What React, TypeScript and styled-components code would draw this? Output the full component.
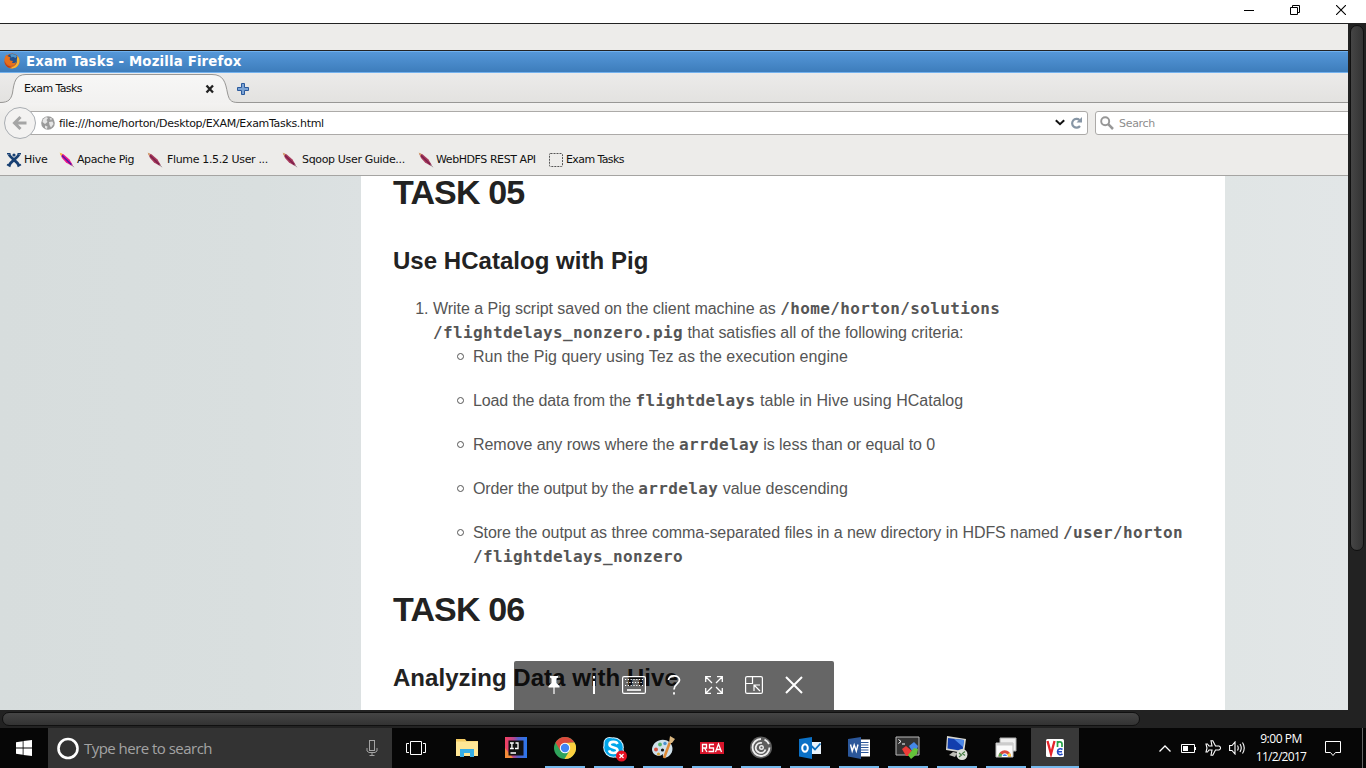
import React from "react";
import styled, { createGlobalStyle, css } from "styled-components";

const GlobalStyle = createGlobalStyle`
  *, *::before, *::after { box-sizing: border-box; }
  html, body { margin: 0; padding: 0; height: 768px; overflow: hidden; background: #060606; }
  svg { display: block; flex: none; }
`;

const Screen = styled.div`
  width: 1366px;
  height: 768px;
  display: flex;
  flex-direction: column;
  overflow: hidden;
  font-family: "DejaVu Sans", sans-serif;
`;

const WindowBar = styled.header`
  height: 24px;
  flex: none;
  background: #fff;
  border-bottom: 1px solid #222;
  display: flex;
  justify-content: flex-end;
  padding-right: 2px;
`;

const WindowButton = styled.div`
  width: 46px;
  height: 20px;
  display: flex;
  align-items: center;
  justify-content: center;
`;

const Viewer = styled.div`
  height: 686px;
  flex: none;
  display: flex;
  background: #222;
`;

const Remote = styled.div`
  width: 1348px;
  height: 686px;
  flex: none;
  position: relative;
  display: flex;
  flex-direction: column;
  overflow: hidden;
`;

const PanelStrip = styled.div`
  height: 27px;
  flex: none;
  background: #edecea;
  border-bottom: 1px solid #222;
`;

const TitleBar = styled.div`
  height: 22px;
  flex: none;
  display: flex;
  align-items: center;
  padding: 0 0 2px 4px;
  gap: 6px;
  color: #fff;
  background: linear-gradient(#5597d8, #3d7dbc);
  border-top: 1px solid #6fb0ee;
  border-bottom: 1px solid #74b2ee;
  font: bold 13.3px "DejaVu Sans", sans-serif;
  letter-spacing: 0.16px;
`;

const TabStrip = styled.div`
  height: 30px;
  flex: none;
  display: flex;
  background: linear-gradient(#ecebea, #e3e2e0);
  border-bottom: 1px solid #989795;
`;

const Tab = styled.div`
  width: 236px;
  height: 30px;
  position: relative;
  flex: none;
  display: flex;
  align-items: center;
  padding: 0 21px 0 24px;
  justify-content: space-between;
`;

const TabShape = styled.svg`
  position: absolute;
  left: 0;
  top: 0;
`;

const TabClose = styled.svg`
  position: relative;
  margin-top: 1px;
`;

const Label = styled.span<{ $ls?: number; $color?: string }>`
  position: relative;
  white-space: nowrap;
  font-size: 11px;
  letter-spacing: ${(p) => p.$ls ?? 0}px;
  color: ${(p) => p.$color ?? "#111"};
`;

const NewTab = styled.div`
  padding: 10px 0 0 1px;
`;

const NavBar = styled.div`
  height: 41px;
  flex: none;
  display: flex;
  align-items: center;
  padding: 0 0 2px 4px;
  background: linear-gradient(#f3f2f1, #edecea 12px);
`;

const BackButton = styled.div`
  width: 32px;
  height: 32px;
  flex: none;
  z-index: 1;
  border-radius: 50%;
  border: 1px solid #a9adb2;
  background: #f3f2f1;
  display: flex;
  align-items: center;
  justify-content: center;
`;

const UrlField = styled.div`
  width: 1060px;
  height: 24px;
  margin-left: -8px;
  flex: none;
  display: flex;
  align-items: center;
  padding-left: 12px;
  background: #fff;
  border: 1px solid #acaaa8;
  border-radius: 0 3px 3px 0;
`;

const Address = styled.div`
  flex: 1;
  display: flex;
  padding: 2px 0 0 4px;
`;

const SearchPrompt = styled.div`
  display: flex;
  padding-top: 2px;
`;

const SearchField = styled.div`
  width: 260px;
  height: 24px;
  margin-left: 7px;
  flex: none;
  display: flex;
  align-items: center;
  gap: 5px;
  padding-left: 4px;
  background: #fff;
  border: 1px solid #acaaa8;
  border-radius: 3px;
`;

const BookmarkBar = styled.div`
  height: 32px;
  flex: none;
  display: flex;
  align-items: center;
  padding-left: 6px;
  background: #edecea;
  border-bottom: 1px solid #a5a4a2;
`;

const Bookmark = styled.div<{ $w: number; $gap: number }>`
  width: ${(p) => p.$w}px;
  flex: none;
  display: flex;
  align-items: center;
  gap: ${(p) => p.$gap}px;
`;

const PageView = styled.main`
  height: 534px;
  flex: none;
  overflow: hidden;
  background: linear-gradient(90deg, #d7dddd, #d9dfdf 260px, #dce1e2 361px, #e0e5e5 1225px, #e2e6e7);
`;

const Sheet = styled.article`
  width: 864px;
  height: 560px;
  margin-left: 361px;
  padding: 0 32px;
  background: #fff;
  color: #555;
  font: 16px/24px "Liberation Sans", sans-serif;
`;

const TaskTitle = styled.h1<{ $top: number }>`
  margin: ${(p) => p.$top}px 0 0;
  font-size: 34px;
  line-height: 32px;
  letter-spacing: -0.85px;
  color: #222;
`;

const TaskSubtitle = styled.h2`
  margin: 38px 0 0;
  font-size: 24px;
  line-height: 30px;
  letter-spacing: 0.03px;
  color: #222;
`;

const Steps = styled.ol`
  margin: 21px 0 0;
  padding-left: 40px;
`;

const SubSteps = styled.ul`
  margin: 0;
  padding-left: 40px;
  list-style: none;
`;

const SubStep = styled.li`
  & + & { margin-top: 20px; }
  &::before {
    content: "";
    display: inline-block;
    width: 7px;
    height: 7px;
    margin: 0 9px 2px -16px;
    border: 1px solid #555;
    border-radius: 50%;
  }
`;

const Line = styled.span`
  white-space: nowrap;
`;

const Run = styled.span<{ $ls: number }>`
  letter-spacing: ${(p) => p.$ls}px;
`;

const Code = styled.code`
  font: bold 16px/16px "DejaVu Sans Mono", monospace;
  letter-spacing: 0.367px;
`;

const SessionTools = styled.div`
  position: absolute;
  left: 514px;
  top: 637px;
  width: 320px;
  height: 49px;
  padding: 0 20px;
  display: flex;
  background: rgba(0, 0, 0, 0.6);
  border-radius: 2px 2px 0 0;
`;

const Tool = styled.div`
  width: 40px;
  height: 48px;
  display: flex;
  align-items: center;
  justify-content: center;
`;

const VerticalTrack = styled.div`
  width: 18px;
  padding: 1px 2px 0 2px;
`;

const thumb = css`
  border: 1px solid #101010;
  border-radius: 7px;
`;

const VerticalThumb = styled.div`
  ${thumb}
  width: 14px;
  height: 526px;
  background: linear-gradient(90deg, #454545, #333);
`;

const HorizontalTrack = styled.div`
  height: 18px;
  flex: none;
  padding: 2px 0 0 2px;
  background: #222;
`;

const HorizontalThumb = styled.div`
  ${thumb}
  width: 1138px;
  height: 14px;
  background: linear-gradient(#454545, #333);
`;

const Taskbar = styled.footer`
  height: 40px;
  flex: none;
  display: flex;
  background: #060606;
  font-family: "Open Sans", sans-serif;
`;

const StartButton = styled.div`
  width: 48px;
  display: flex;
  align-items: center;
  justify-content: center;
`;

const SearchBox = styled.div`
  width: 344px;
  display: flex;
  align-items: center;
  padding: 0 14px 0 8px;
  gap: 5px;
  background: #333;
  color: #a3a3a3;
  font-size: 15px;
`;

const SearchHint = styled.span`
  flex: 1;
  white-space: nowrap;
  letter-spacing: -0.53px;
`;

const AppButton = styled.div<{ $running?: boolean; $active?: boolean; $first?: boolean }>`
  width: 48px;
  height: 40px;
  flex: none;
  margin-right: ${(p) => (p.$first ? 3 : 1)}px;
  padding: 8px ${(p) => (p.$active ? 0 : 4)}px 0;
  display: flex;
  flex-direction: column;
  align-items: center;
  justify-content: space-between;
  background: ${(p) => (p.$active ? "#393939" : "transparent")};
  &::after {
    content: "";
    width: 100%;
    height: 2px;
    background: ${(p) => (p.$running || p.$active ? "#76b9ed" : "transparent")};
  }
`;

const Tray = styled.div`
  flex: 1;
  display: flex;
  align-items: center;
  justify-content: flex-end;
`;

const TrayIcon = styled.div<{ $w: number; $right?: number }>`
  width: ${(p) => p.$w}px;
  padding-right: ${(p) => p.$right ?? 0}px;
  display: flex;
  justify-content: center;
`;

const Clock = styled.div`
  width: 64px;
  color: #fff;
  text-align: center;
  font-size: 12px;
  line-height: 18px;
  letter-spacing: -0.45px;
  white-space: nowrap;
`;

const ClockDate = styled.div`
  letter-spacing: -0.7px;
`;

const ShowDesktop = styled.div`
  width: 4px;
  height: 40px;
  border-left: 1px solid #666;
`;

const Feather = ({ bright = false }: { bright?: boolean }) => (
  <svg width="16" height="16" viewBox="0 0 16 16">
    <path d="M1 1.2 4.5 2.2 10.5 7.5 14 13.5 12.6 13.8 7 10.5 3 6Z" fill={bright ? "#f0148a" : "#a83a5c"} />
    <path d="M3 3.5 7.5 7.8 12.5 12.8" stroke={bright ? "#4a1aa8" : "#7a1f4c"} strokeWidth="1.3" fill="none" />
    <path d="M.6.6 3.5 2 2.2 4Z" fill={bright ? "#f2d230" : "#d6a368"} />
    <path d="M12.6 12.6 14.8 15.2" stroke="#9b8d96" strokeWidth="1" />
  </svg>
);

const Firefox = () => (
  <svg width="16" height="16" viewBox="0 0 16 16">
    <circle cx="8" cy="8" r="7.6" fill="#e0661c" />
    <circle cx="8.3" cy="6.6" r="5.9" fill="#24508c" />
    <path d="M6 1.5C8 .3 11.5 1 13 3.2L11.5 5 9 3.8 7.5 4.5Z" fill="#4f97cc" />
    <path d="M.5 7C.5 4 1.8 2.3 3 1.6c0 1 .5 1.6 1.4 2L6.5 4.6 5.5 6l.8 1.5 2.7.4-1 1.8c1.5.8 3.4.2 4.2-1.2C12 12 9 13.5 6 12.5 3 11.5 1 9 .5 7Z" fill="#e8701d" />
    <path d="M13.5 3C16.5 6 16 11.5 12.5 14 9.5 16 6.5 15.5 5 14.5 9 15 13.5 12 12.8 7Z" fill="#f6b534" />
    <path d="M.5 8C1.5 11.5 4 13.5 8 14 5 16.2.8 13 .5 8Z" fill="#b83a1a" />
  </svg>
);

const App = () => (
  <Screen>
    <GlobalStyle />
    <WindowBar>
      <WindowButton>
        <svg width="10" height="10"><path d="M0 5.5H10" stroke="#000" /></svg>
      </WindowButton>
      <WindowButton>
        <svg width="10" height="10" fill="none" stroke="#000">
          <path d="M.5 2.5H7.5V9.5H.5ZM2.5 2.5V.5H9.5V7.5H7.5" />
        </svg>
      </WindowButton>
      <WindowButton>
        <svg width="10" height="10"><path d="M0 0 10 10M10 0 0 10" stroke="#000" strokeWidth="1.1" /></svg>
      </WindowButton>
    </WindowBar>

    <Viewer>
      <Remote>
        <PanelStrip />
        <TitleBar>
          <Firefox />
          Exam Tasks - Mozilla Firefox
        </TitleBar>
        <TabStrip>
          <Tab>
            <TabShape width="240" height="30">
              <defs>
                <linearGradient id="tab" x1="0" y1="0" x2="0" y2="1">
                  <stop offset="0" stopColor="#f7f7f6" />
                  <stop offset="1" stopColor="#f2f1f0" />
                </linearGradient>
              </defs>
              <path d="M0 29.5C9 29.5 11 26 12.5 20C14 10 15 1.5 26 1.5H212C224 1.5 225.5 10 227.5 20C229 26 230 29.5 238 29.5V30H0Z" fill="url(#tab)" />
              <path d="M0 29.5C9 29.5 11 26 12.5 20C14 10 15 1.5 26 1.5H212C224 1.5 225.5 10 227.5 20C229 26 230 29.5 238 29.5" fill="none" stroke="#989795" />
            </TabShape>
            <Label $ls={-0.6}>Exam Tasks</Label>
            <TabClose width="10" height="10" viewBox="0 0 10 10">
              <path d="M1.5 1.5 8 8.5M8 1.5 1.5 8.5" stroke="#222" strokeWidth="2.3" />
            </TabClose>
          </Tab>
          <NewTab>
            <svg width="12" height="12" viewBox="0 0 12 12">
              <path d="M4.5.5h3v4h4v3h-4v4h-3v-4h-4v-3h4Z" fill="#7ba3d4" stroke="#2c5a9c" strokeLinejoin="round" />
            </svg>
          </NewTab>
        </TabStrip>
        <NavBar>
          <BackButton>
            <svg width="16" height="16" viewBox="0 0 16 16" fill="none" stroke="#a5a5a5" strokeWidth="3">
              <path d="M8.5 2 2.5 8 8.5 14M3 8H14.5" />
            </svg>
          </BackButton>
          <UrlField>
            <svg width="14" height="14" viewBox="0 0 14 14">
              <circle cx="7" cy="7" r="6.8" fill="#9b9b9b" />
              <path d="M2 3.5 5 1 7 2 5.5 4 6.5 6 4 8 1.5 6ZM8.5 2 11 2.5 10 4.5ZM8 6 11.5 5.5 12.5 8 10 11.5 8.5 9ZM4 9.5 6.5 10.5 6 13 4 12Z" fill="#e6e6e6" />
            </svg>
            <Address><Label $ls={-0.315}>file:///home/horton/Desktop/EXAM/ExamTasks.html</Label></Address>
            <svg width="10" height="7" viewBox="0 0 10 7"><path d="M.8 1.2 5 5.2 9.2 1.2" fill="none" stroke="#111" strokeWidth="2" /></svg>
            <svg width="22" height="14" viewBox="0 0 22 14">
              <path d="M14.5 4A4.4 4.4 0 1 0 15 10" fill="none" stroke="#8796a5" strokeWidth="2.2" />
              <path d="M11.5 6.5H17V1Z" fill="#8796a5" />
            </svg>
          </UrlField>
          <SearchField>
            <svg width="14" height="14" viewBox="0 0 14 14" fill="none" stroke="#979797">
              <circle cx="5.2" cy="5.2" r="4" strokeWidth="1.9" />
              <path d="M8.2 8.2 13 13" strokeWidth="2.5" />
            </svg>
            <SearchPrompt><Label $ls={-0.3} $color="#8d8d8d">Search</Label></SearchPrompt>
          </SearchField>
        </NavBar>
        <BookmarkBar>
          <Bookmark $w={53} $gap={2}>
            <svg width="16" height="16" viewBox="0 0 16 16" fill="none" stroke="#173f72">
              <path d="M3 2.5C4.5 6 10.5 8.5 13 13.5M13 2.5C11.5 6 5.5 8.5 3 13.5" strokeWidth="2.8" />
              <path d="M1 1.8H4.5M11.5 1.8H15M1 12.5 4.5 14.5M15 12.5 11.5 14.5" strokeWidth="1.5" />
              <circle cx="8" cy="3" r="1.6" fill="#173f72" stroke="none" />
            </svg>
            <Label $ls={-0.25}>Hive</Label>
          </Bookmark>
          <Bookmark $w={88} $gap={2}><Feather bright /><Label $ls={-0.4}>Apache Pig</Label></Bookmark>
          <Bookmark $w={135} $gap={4}><Feather /><Label $ls={-0.35}>Flume 1.5.2 User ...</Label></Bookmark>
          <Bookmark $w={136} $gap={4}><Feather /><Label $ls={-0.34}>Sqoop User Guide...</Label></Bookmark>
          <Bookmark $w={130} $gap={2}><Feather /><Label $ls={-0.43}>WebHDFS REST API</Label></Bookmark>
          <Bookmark $w={90} $gap={3}>
            <svg width="15" height="15"><rect x="1.5" y="1.5" width="13" height="13" rx="1" fill="none" stroke="#555" strokeDasharray="2 1" /></svg>
            <Label $ls={-0.6}>Exam Tasks</Label>
          </Bookmark>
        </BookmarkBar>
        <PageView>
          <Sheet>
            <TaskTitle $top={0}>TASK 05</TaskTitle>
            <TaskSubtitle>Use HCatalog with Pig</TaskSubtitle>
            <Steps>
              <li>
                <Line><Run $ls={-0.04}>Write a Pig script saved on the client machine as </Run><Code>/home/horton/solutions</Code></Line>
                <br />
                <Line><Code>/flightdelays_nonzero.pig</Code><Run $ls={-0.03}> that satisfies all of the following criteria:</Run></Line>
                <SubSteps>
                  <SubStep><Line><Run $ls={0.03}>Run the Pig query using Tez as the execution engine</Run></Line></SubStep>
                  <SubStep><Line><Run $ls={-0.13}>Load the data from the </Run><Code>flightdelays</Code><Run $ls={0.05}> table in Hive using HCatalog</Run></Line></SubStep>
                  <SubStep><Line><Run $ls={-0.05}>Remove any rows where the </Run><Code>arrdelay</Code><Run $ls={-0.06}> is less than or equal to 0</Run></Line></SubStep>
                  <SubStep><Line><Run $ls={-0.16}>Order the output by the </Run><Code>arrdelay</Code><Run $ls={0.04}> value descending</Run></Line></SubStep>
                  <SubStep>
                    <Line><Run $ls={-0.06}>Store the output as three comma-separated files in a new directory in HDFS named </Run><Code>/user/horton</Code></Line>
                    <br />
                    <Line><Code>/flightdelays_nonzero</Code></Line>
                  </SubStep>
                </SubSteps>
              </li>
            </Steps>
            <TaskTitle $top={24}>TASK 06</TaskTitle>
            <TaskSubtitle>Analyzing Data with Hive</TaskSubtitle>
          </Sheet>
        </PageView>
        <SessionTools>
          <Tool>
            <svg width="12" height="18" viewBox="0 0 12 18" fill="#fff"><path d="M2 0H10V1.5L8.5 2.5V7L11.5 10V11.5H6.6V18H5.4V11.5H.5V10L3.5 7V2.5L2 1.5Z" /></svg>
          </Tool>
          <Tool>
            <svg width="4" height="18" fill="#fff"><path d="M1 0H3V2.5H1ZM1 5H3V18H1Z" /></svg>
          </Tool>
          <Tool>
            <svg width="24" height="18" viewBox="0 0 24 18" fill="none" stroke="#fff">
              <rect x=".6" y=".6" width="22.8" height="16.8" rx="1.5" strokeWidth="1.2" />
              <path d="M3 3.5H21M4.5 6.5H20M3 9.5H21" strokeWidth="1.2" strokeDasharray="1.2 1.6" />
              <path d="M5 14H19" strokeWidth="1.6" />
            </svg>
          </Tool>
          <Tool>
            <svg width="14" height="20" viewBox="0 0 14 20" fill="none" stroke="#fff" strokeWidth="1.8">
              <path d="M1.5 5C1.5-.5 12.5-.5 12.5 5C12.5 9 7 9 7 14.5M7 17.3V19.5" />
            </svg>
          </Tool>
          <Tool>
            <svg width="18" height="18" viewBox="0 0 18 18" fill="none" stroke="#fff" strokeWidth="1.3">
              <path d="M.7 6V.7H6M12 .7H17.3V6M17.3 12V17.3H12M6 17.3H.7V12M1 1 7 7M17 1 11 7M17 17 11 11M1 17 7 11" />
            </svg>
          </Tool>
          <Tool>
            <svg width="18" height="18" viewBox="0 0 18 18" fill="none" stroke="#fff" strokeWidth="1.2">
              <rect x=".6" y=".6" width="16.8" height="16.8" rx="1.5" />
              <path d="M.6 7.5H7.5V.6M9 15V9H15M9 9 15 15" />
            </svg>
          </Tool>
          <Tool>
            <svg width="18" height="18" viewBox="0 0 18 18"><path d="M1 1 17 17M17 1 1 17" stroke="#fff" strokeWidth="2" /></svg>
          </Tool>
        </SessionTools>
      </Remote>
      <VerticalTrack><VerticalThumb /></VerticalTrack>
    </Viewer>
    <HorizontalTrack><HorizontalThumb /></HorizontalTrack>

    <Taskbar>
      <StartButton>
        <svg width="16" height="16" viewBox="0 0 16 16" fill="#fff">
          <path d="M0 2.2 6.7 1.2V7.5H0ZM7.5 1.1 16 0V7.5H7.5ZM0 8.4H6.7V14.8L0 13.8ZM7.5 8.4H16V16L7.5 14.9Z" />
        </svg>
      </StartButton>
      <SearchBox>
        <svg width="23" height="23" viewBox="0 0 23 23"><circle cx="12" cy="11.5" r="9.5" fill="none" stroke="#fff" strokeWidth="2.6" /></svg>
        <SearchHint>Type here to search</SearchHint>
        <svg width="12" height="16" viewBox="0 0 12 16" fill="none" stroke="#a3a3a3">
          <rect x="3.5" y=".5" width="5" height="10" />
          <path d="M1 8V11L3 12.5H9L11 11V8M6 12.5V15.5M3.5 15.5H8.5" />
        </svg>
      </SearchBox>
      <AppButton $first>
        <svg width="20" height="24" viewBox="0 0 20 24" fill="none" stroke="#fff">
          <path d="M4.5 5.5H15.5V18.5H4.5ZM3 7.5H.5V16.5H3M17 7.5H19.5V16.5H17" />
        </svg>
      </AppButton>
      <AppButton>
        <svg width="22" height="24" viewBox="0 0 22 24">
          <path d="M0 3H9L10.5 5H22V20H0Z" fill="#f4cb62" />
          <path d="M0 5.5H22V20H0Z" fill="#ffe796" />
          <path d="M4 13H18V21H14V17H8V21H4Z" fill="#36aee6" />
        </svg>
      </AppButton>
      <AppButton>
        <svg width="22" height="24" viewBox="0 0 22 24">
          <defs>
            <linearGradient id="ij" x1="0" x2="1">
              <stop offset="0" stopColor="#f6405f" /><stop offset=".4" stopColor="#b5458f" /><stop offset=".6" stopColor="#5560c8" /><stop offset="1" stopColor="#2878ee" />
            </linearGradient>
          </defs>
          <path d="M0 1H22V22H0Z" fill="url(#ij)" />
          <path d="M0 12 8 22H0Z" fill="#f38b3a" />
          <path d="M3.5 4.5H18.5V19.5H3.5Z" fill="#111" />
          <path d="M5 7H8.8M6.9 7V12.5M5 12.5H8.8M10.5 7H13V12.5H10M5.5 17H11" fill="none" stroke="#fff" strokeWidth="1.3" />
        </svg>
      </AppButton>
      <AppButton $running>
        <svg width="22" height="24" viewBox="0 0 22 24">
          <circle cx="11" cy="12" r="11" fill="#2fa35b" />
          <path d="M1.5 6.5A11 11 0 0 1 20.5 6.5L11 7 6.3 14.7Z" fill="#dc4a3d" />
          <path d="M20.5 6.5A11 11 0 0 1 10.5 23L15.5 14.5 11 7Z" fill="#fdd03f" />
          <circle cx="11" cy="12" r="5.2" fill="#fff" />
          <circle cx="11" cy="12" r="4.2" fill="#4285f4" />
        </svg>
      </AppButton>
      <AppButton $running>
        <svg width="26" height="26" viewBox="0 0 26 26">
          <circle cx="8.5" cy="7" r="6" fill="#d8f2ff" /><circle cx="17" cy="16" r="6" fill="#d8f2ff" />
          <circle cx="12.5" cy="11.5" r="10.3" fill="#d8f2ff" />
          <circle cx="8.5" cy="7" r="5" fill="#00a6ea" /><circle cx="17" cy="16" r="5" fill="#00a6ea" />
          <circle cx="12.5" cy="11.5" r="9.3" fill="#00a6ea" />
          <path d="M16.5 8C15.5 5 8.5 5.2 8.5 8.5C8.5 12.5 16.5 10.5 16.5 14.3C16.5 17.8 9 17.8 8 14.3" fill="none" stroke="#fff" strokeWidth="2.6" />
          <circle cx="20.5" cy="20" r="5.5" fill="#e81123" />
          <path d="M18.5 18 22.5 22M22.5 18 18.5 22" stroke="#fff" strokeWidth="1.3" />
        </svg>
      </AppButton>
      <AppButton $running>
        <svg width="24" height="24" viewBox="0 0 24 24">
          <path d="M1 13C2 6 9 2 16 4.5C23 8 23 16 18 20C13 24 11 20 12 18C8 22 1 19 1 13Z" fill="#cfe0ea" />
          <circle cx="5" cy="13.5" r="2" fill="#d9523f" /><circle cx="9" cy="8.5" r="1.9" fill="#55b36b" />
          <circle cx="7.5" cy="18" r="1.6" fill="#d7a53d" /><circle cx="14" cy="7.5" r="1.7" fill="#4a91cf" /><circle cx="11.5" cy="14" r="1.6" fill="#111" />
          <path d="M13 22 19 6" stroke="#df8b38" strokeWidth="2.5" /><path d="M18 7 19 0 24 3 21 7Z" fill="#d9b680" />
        </svg>
      </AppButton>
      <AppButton $running>
        <svg width="24" height="24" viewBox="0 0 24 24">
          <path d="M0 6H24V18H0Z" fill="#d8152b" />
          <path d="M2.5 16V8.5H6.5V12H3M4.5 12 7 16M14 8.5H9.5V12H13.5V15.5H8.5M15.5 16 18.5 8 21.5 16M16.5 13.5H20.5" fill="none" stroke="#fff" strokeWidth="1.3" />
        </svg>
      </AppButton>
      <AppButton $running>
        <svg width="24" height="24" viewBox="0 0 24 24" fill="none">
          <circle cx="12" cy="11.5" r="11" fill="#5d5d5d" />
          <path d="M12 3A8.5 8.5 0 1 0 20.5 11.5M13 7A5 5 0 1 0 16.5 13.5M20 8A8.5 8.5 0 0 0 15.5 3.7" stroke="#eee" strokeWidth="1.8" />
          <circle cx="12.5" cy="11.5" r="1.8" stroke="#eee" strokeWidth="1.4" />
        </svg>
      </AppButton>
      <AppButton $running>
        <svg width="24" height="24" viewBox="0 0 24 24">
          <path d="M11 6H23V18H11Z" fill="#e9f3fb" /><path d="M13.5 10 17 13.5 22.5 7.5" stroke="#0a6fc0" strokeWidth="1.8" fill="none" />
          <path d="M1 3 14 1V23L1 20.5Z" fill="#0b71c6" />
          <ellipse cx="7" cy="12" rx="2.8" ry="3.8" fill="none" stroke="#fff" strokeWidth="2" />
        </svg>
      </AppButton>
      <AppButton $running>
        <svg width="24" height="24" viewBox="0 0 24 24">
          <path d="M12 3.5H23V20.5H12Z" fill="#fff" /><path d="M14 6.5H21.5M14 9H21.5M14 11.5H21.5M14 14H21.5M14 16.5H21.5" stroke="#2b579a" />
          <path d="M1 3 14 1V23L1 20.5Z" fill="#2b579a" />
          <path d="M3.5 8.5 5.2 15 7.2 9 9.3 15 11 8.5" fill="none" stroke="#fff" strokeWidth="1.4" />
        </svg>
      </AppButton>
      <AppButton $running>
        <svg width="26" height="25" viewBox="0 0 26 25">
          <path d="M1 1H24V19H1Z" fill="#333" stroke="#bbb" /><path d="M3.5 3.5 6 5.5 3.5 7.5M7 8H10" fill="none" stroke="#fff" />
          <path d="M14 10 19 6 23 10 22 13 17 15Z" fill="#4588e8" /><path d="M7 13 11 10 17 15 13 20 11 20Z" fill="#ec3c38" /><path d="M13 19 19 12 23 13 22 18 16 23Z" fill="#65c23a" />
        </svg>
      </AppButton>
      <AppButton $running>
        <svg width="24" height="25" viewBox="0 0 24 25">
          <path d="M2 0 21 3 19 17 1 14Z" fill="#d8d8d2" /><path d="M3 2 19 4 17.5 15 2.5 12.5Z" fill="#123fae" /><path d="M9 3 19 4 18 11Z" fill="#4c88e9" />
          <path d="M8 16 12 17 10 21 4 19Z" fill="#bdbdb6" />
          <circle cx="17" cy="18.5" r="5.5" fill="#dce0d8" /><path d="M14 17 16.5 19 14 21M20 15.5 17.5 17.5 20 19.5" fill="none" stroke="#477d44" strokeWidth="1.2" />
        </svg>
      </AppButton>
      <AppButton $running>
        <svg width="22" height="24" viewBox="0 0 22 24">
          <path d="M5 2H21V15H5Z" fill="#eee" stroke="#aaa" /><path d="M1 7H18V21H1Z" fill="#fafafa" stroke="#bbb" /><path d="M1 7H18V9.5H1Z" fill="#ccc" />
          <path d="M3.500 20.500A6.250 6.250 0 0 1 16 20.500Z" fill="#dc4a3d" />
          <path d="M3.500 20.500A6.250 6.250 0 0 1 4.800 16.700L9.750 20.500Z" fill="#4caf50" />
          <path d="M14.700 16.700A6.250 6.250 0 0 1 16 20.500H9.750Z" fill="#fdd03f" />
          <path d="M7 20.5A2.8 2.8 0 0 1 12.6 20.5Z" fill="#4285f4" stroke="#fff" />
        </svg>
      </AppButton>
      <AppButton $active>
        <svg width="20" height="24" viewBox="0 0 20 24" fill="none">
          <rect x="1" y="3" width="18" height="18" rx="1.5" fill="#fff" />
          <path d="M2.5 5 6 18 9.5 5" stroke="#e5252b" strokeWidth="2.3" />
          <path d="M12.5 11V5M12.5 7.5C12.5 5.5 17 5 17 8V11" stroke="#24a148" strokeWidth="1.7" /><path d="M12.500 15.800H17M17.500 13.500C15.500 12 12.500 13 12.5 15.8C12.5 18.8 15.5 19.5 17.5 17.8" stroke="#2249c5" strokeWidth="1.6" />
        </svg>
      </AppButton>
      <Tray>
        <TrayIcon $w={25}><svg width="12" height="7" viewBox="0 0 12 7"><path d="M.5 6.5 6 1 11.5 6.5" fill="none" stroke="#fff" strokeWidth="1.3" /></svg></TrayIcon>
        <TrayIcon $w={23}>
          <svg width="15" height="9"><path d="M.5.5H13.5V8.5H.5Z" fill="none" stroke="#fff" /><path d="M2 2H7V7H2ZM14 3H15V6H14Z" fill="#fff" /></svg>
        </TrayIcon>
        <TrayIcon $w={25}>
          <svg width="16" height="16" viewBox="0 0 16 16" fill="none" stroke="#fff" strokeWidth="1.1">
            <path d="M6 .8H7.8L10.5 6H14C16 6.5 16 9.5 14 10H10.5L7.8 15.2H6L7 10H4L2.5 12H1L2 8 1 4H2.5L4 6H7Z" />
          </svg>
        </TrayIcon>
        <TrayIcon $w={24}>
          <svg width="17" height="14" viewBox="0 0 17 14" fill="none" stroke="#fff" strokeWidth="1.1">
            <path d="M.6 4.5H3L6 1V13L3 9.5H.6ZM8.5 4.5Q10 7 8.5 9.5M11 3Q13.5 7 11 11M13.5 1.5Q17 7 13.5 12.5" />
          </svg>
        </TrayIcon>
        <Clock>9:00 PM<ClockDate>11/2/2017</ClockDate></Clock>
        <TrayIcon $w={49} $right={9}>
          <svg width="16" height="17" viewBox="0 0 16 17"><path d="M.5 1.5H15.5V12.5H10.5L8 15.5 5.5 12.5H.5Z" fill="none" stroke="#fff" /></svg>
        </TrayIcon>
        <ShowDesktop />
      </Tray>
    </Taskbar>
  </Screen>
);

export default App;
